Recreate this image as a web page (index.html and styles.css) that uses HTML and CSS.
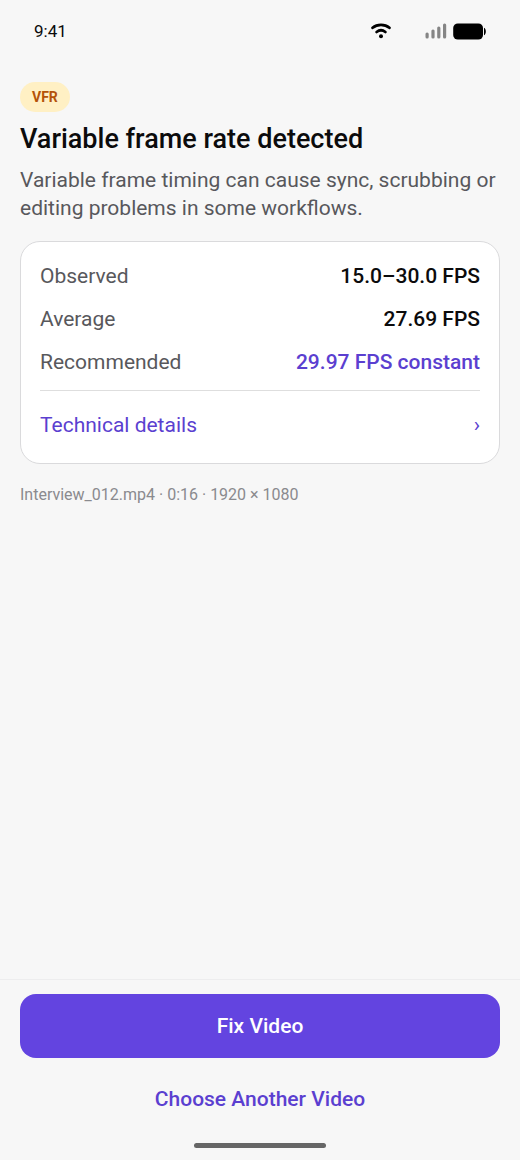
FILE: index.html
```html
<!DOCTYPE html>
<html lang="en">
<head>
<meta charset="utf-8">
<meta name="viewport" content="width=device-width, initial-scale=1">
<title>Variable frame rate detected</title>
<link rel="stylesheet" href="styles.css">
</head>
<body>
<div class="screen">
  <header class="status">
    <time class="clock">9:41</time>
    <div class="indicators">
      <svg class="wifi" width="20" height="16" viewBox="0 0 20 16" fill="none" stroke="#000" stroke-width="2.8" stroke-linecap="round" aria-label="Wi-Fi">
        <path d="M1.6 4.8C6.2 0.9 13.8 0.9 18.4 4.8"/>
        <path d="M5.6 9C8.2 7 11.8 7 14.4 9"/>
        <circle cx="10" cy="13.2" r="2" fill="#000" stroke="none"/>
      </svg>
      <svg class="signal" width="22" height="16" viewBox="0 0 22 16" fill="#858585" aria-label="Signal">
        <rect x="0.5" y="9.4" width="3.2" height="6" rx="1.5"/>
        <rect x="6.4" y="6.4" width="3.2" height="9" rx="1.5"/>
        <rect x="12.2" y="3.4" width="3.2" height="12" rx="1.5"/>
        <rect x="18" y="0.5" width="3.2" height="15" rx="1.5"/>
      </svg>
      <svg class="battery" width="34" height="17" viewBox="0 0 34 17" aria-label="Battery">
        <rect x="0.2" y="0.4" width="29.8" height="16.2" rx="4.6"/>
        <path d="M31 4.8C33.4 5.6 33.4 11.4 31 12.2z"/>
      </svg>
    </div>
  </header>

  <main class="content">
    <span class="badge">VFR</span>
    <h1 class="title">Variable frame rate detected</h1>
    <p class="lead">Variable frame timing can cause sync, scrubbing or editing problems in some workflows.</p>
    <section class="card">
      <dl class="facts">
        <div class="fact"><dt>Observed</dt><dd>15.0–30.0 FPS</dd></div>
        <div class="fact"><dt>Average</dt><dd>27.69 FPS</dd></div>
        <div class="fact"><dt>Recommended</dt><dd class="accent">29.97 FPS constant</dd></div>
      </dl>
      <button class="details" type="button"><span>Technical details</span><span class="chevron" aria-hidden="true">›</span></button>
    </section>
    <p class="meta">Interview_012.mp4 · 0:16 · 1920 × 1080</p>
  </main>

  <footer class="actions">
    <button class="primary" type="button">Fix Video</button>
    <button class="secondary" type="button">Choose Another Video</button>
    <div class="home-bar"></div>
  </footer>
</div>
</body>
</html>
```
FILE: styles.css
```css
* {
  box-sizing: border-box;
}

body {
  margin: 0;
  background: #f7f7f7;
  color: #0b0b0c;
  font-family: Roboto, "Liberation Sans", sans-serif;
  font-size: 21px;
  line-height: 28px;
}

button {
  border: 0;
  background: none;
  font: inherit;
  cursor: pointer;
}

.screen {
  display: flex;
  flex-direction: column;
  min-height: 100vh;
}

.status {
  display: flex;
  align-items: center;
  justify-content: space-between;
  height: 62px;
  padding: 0 33px 0 34px;
}

.clock {
  font-size: 17px;
}

.indicators {
  display: flex;
  align-items: center;
}

.signal {
  margin: 0 6px 0 34px;
}

.content {
  flex: 1;
  padding: 20px 20px 24px;
}

.badge {
  display: block;
  width: fit-content;
  padding: 0 12px;
  border-radius: 15px;
  background: #fff0c4;
  color: #b45309;
  font-size: 14px;
  font-weight: 700;
  line-height: 30px;
}

.title {
  margin: 10px 0;
  font-size: 27px;
  font-weight: 500;
  line-height: 34px;
}

.lead {
  margin: 0 0 19px;
  color: #58585c;
}

.card {
  padding: 20px 19px 4px;
  border: 1px solid #dadadc;
  border-radius: 20px;
  background: #fff;
}

.facts {
  display: grid;
  gap: 15px;
  margin: 0;
  padding-bottom: 14px;
  border-bottom: 1px solid #dedede;
}

.fact {
  display: flex;
  justify-content: space-between;
}

.fact dt {
  color: #58585c;
}

.fact dd {
  margin: 0;
  font-weight: 500;
}

.fact .accent,
.details,
.secondary {
  color: #5b3fd0;
}

.details {
  display: flex;
  align-items: center;
  justify-content: space-between;
  width: 100%;
  padding: 20px 0;
}

.meta {
  margin: 19px 0 0;
  color: #8a8a8e;
  font-size: 16px;
  line-height: 24px;
}

.actions {
  display: flex;
  flex-direction: column;
  padding: 14px 20px 12px;
  border-top: 1px solid #ededee;
}

.primary {
  height: 64px;
  border-radius: 16px;
  background: #6344e0;
  color: #fff;
  font-weight: 500;
}

.secondary {
  height: 56px;
  margin: 13px 0 16px;
  font-weight: 500;
}

.home-bar {
  align-self: center;
  width: 132px;
  height: 5px;
  border-radius: 3px;
  background: #666;
}
```
